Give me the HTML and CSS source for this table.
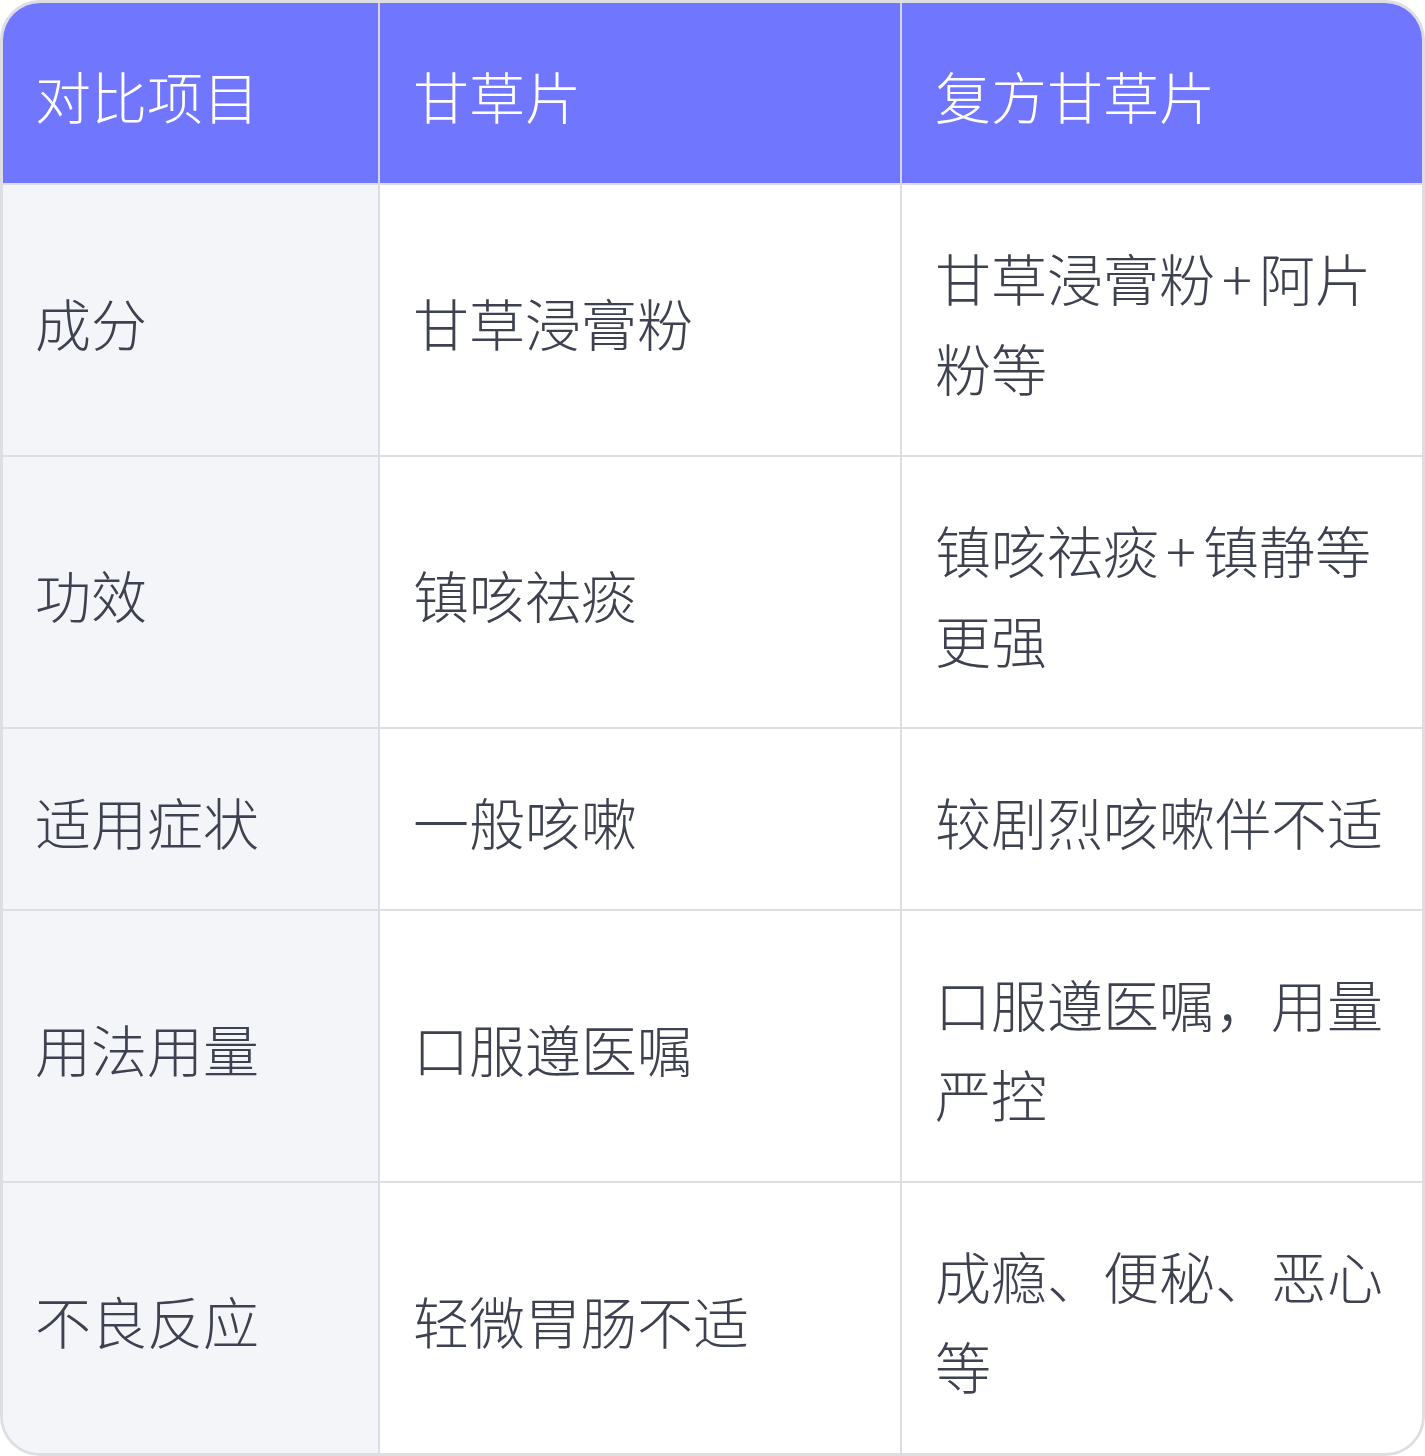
FILE: index.html
```html
<!DOCTYPE html>
<html lang="zh-CN">
<head>
<meta charset="utf-8">
<title>甘草片对比</title>
<link rel="stylesheet" href="styles.css">
</head>
<body>
<div class="wrap">
<table class="cmp">
<colgroup><col class="c1"><col class="c2"><col class="c3"></colgroup>
<thead>
<tr><th>对比项目</th><th>甘草片</th><th>复方甘草片</th></tr>
</thead>
<tbody>
<tr><td>成分</td><td>甘草浸膏粉</td><td>甘草浸膏粉<span class="plus">+</span>阿片粉等</td></tr>
<tr><td>功效</td><td>镇咳祛痰</td><td>镇咳祛痰<span class="plus">+</span>镇静等更强</td></tr>
<tr><td>适用症状</td><td>一般咳嗽</td><td>较剧烈咳嗽伴不适</td></tr>
<tr><td>用法用量</td><td>口服遵医嘱</td><td>口服遵医嘱，用量严控</td></tr>
<tr><td>不良反应</td><td>轻微胃肠不适</td><td>成瘾、便秘、恶心等</td></tr>
</tbody>
</table>
</div>
</body>
</html>
```

FILE: styles.css
```css
html, body {
  margin: 0;
  padding: 0;
  background: #ffffff;
}
body {
  font-family: "Noto Sans CJK SC", "Noto Sans", sans-serif;
  font-weight: 300;
  color: #3e4150;
}
.wrap {
  width: 1425px;
  height: 1456px;
  box-sizing: border-box;
  border: 3px solid #dddee3;
  border-radius: 40px;
  overflow: hidden;
}
.cmp {
  width: 1419px;
  border-collapse: separate;
  border-spacing: 0;
  table-layout: fixed;
}
.c1 { width: 377px; }
.c2 { width: 522px; }
.c3 { width: 520px; }
.cmp th, .cmp td {
  font-size: 56px;
  line-height: 90px;
  text-align: left;
  vertical-align: middle;
  padding: 47px 33px 43px 33px;
  word-break: break-all;
  font-weight: 300;
}
.cmp th {
  background: #7176ff;
  color: #ffffff;
  height: 90px;
  border-bottom: 2px solid #dddee3;
  border-right: 2px solid #d2d4f0;
}
.cmp td {
  background: #ffffff;
  border-bottom: 2px solid #dddee3;
  border-right: 2px solid #dddee3;
}
.cmp th:last-child, .cmp td:last-child {
  border-right: none;
}
.cmp tbody tr:last-child td {
  border-bottom: none;
}
.cmp td:first-child {
  background: #f4f5f9;
  padding-left: 32px;
}
.cmp th:first-child {
  padding-left: 32px;
}
.plus {
  font-weight: 200;
  padding: 0 7px;
}
```
